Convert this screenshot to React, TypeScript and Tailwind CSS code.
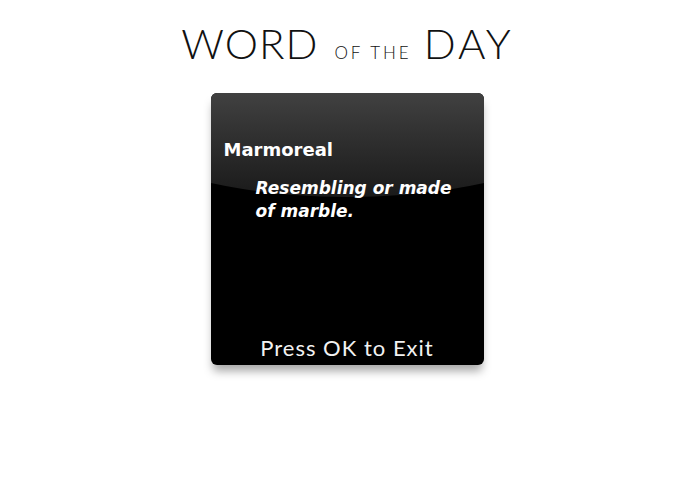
export default function App() {
  return (
    <div className="w-[695px] h-[494px] bg-white flex flex-col items-center">
      {/* Title */}
      <h1 className="mt-[22px] flex items-baseline text-[#111] font-['Lato',sans-serif] font-light leading-none">
        <span className="text-[42px] tracking-[1px] text-[#111]">WORD</span>
        <span className="text-[17px] ml-[16px] mr-[12px] tracking-[3px] text-[#111]">OF THE</span>
        <span className="text-[42px] tracking-[3px] text-[#111]">DAY</span>
      </h1>

      {/* Card */}
      <div className="relative overflow-hidden mt-[29px] -ml-px w-[273px] h-[272px] rounded-[6px] bg-black shadow-[0_8px_10px_-2px_rgba(0,0,0,0.35)] flex flex-col">
        {/* Gloss */}
        <div className="absolute left-[-136px] top-0 w-[545px] h-[104px] rounded-b-[272px_104px] bg-gradient-to-b from-[#414141] to-[#1a1a1a]" />

        <div className="relative pt-[47px] pl-[13px] text-white font-['DejaVu_Sans',sans-serif] font-bold text-[18px] leading-[20px]">
          Marmoreal
        </div>
        <div className="relative mt-[17px] pl-[45px] pr-[18px] text-white font-['DejaVu_Sans',sans-serif] font-bold italic text-[17px] leading-[23px]">
          Resembling or made of marble.
        </div>
        <div className="relative mt-auto mb-[2px] text-center text-[#f2f2f2] font-['Lato',sans-serif] text-[22px] tracking-[1px] leading-[30px]">
          Press OK to Exit
        </div>
      </div>
    </div>
  );
}
